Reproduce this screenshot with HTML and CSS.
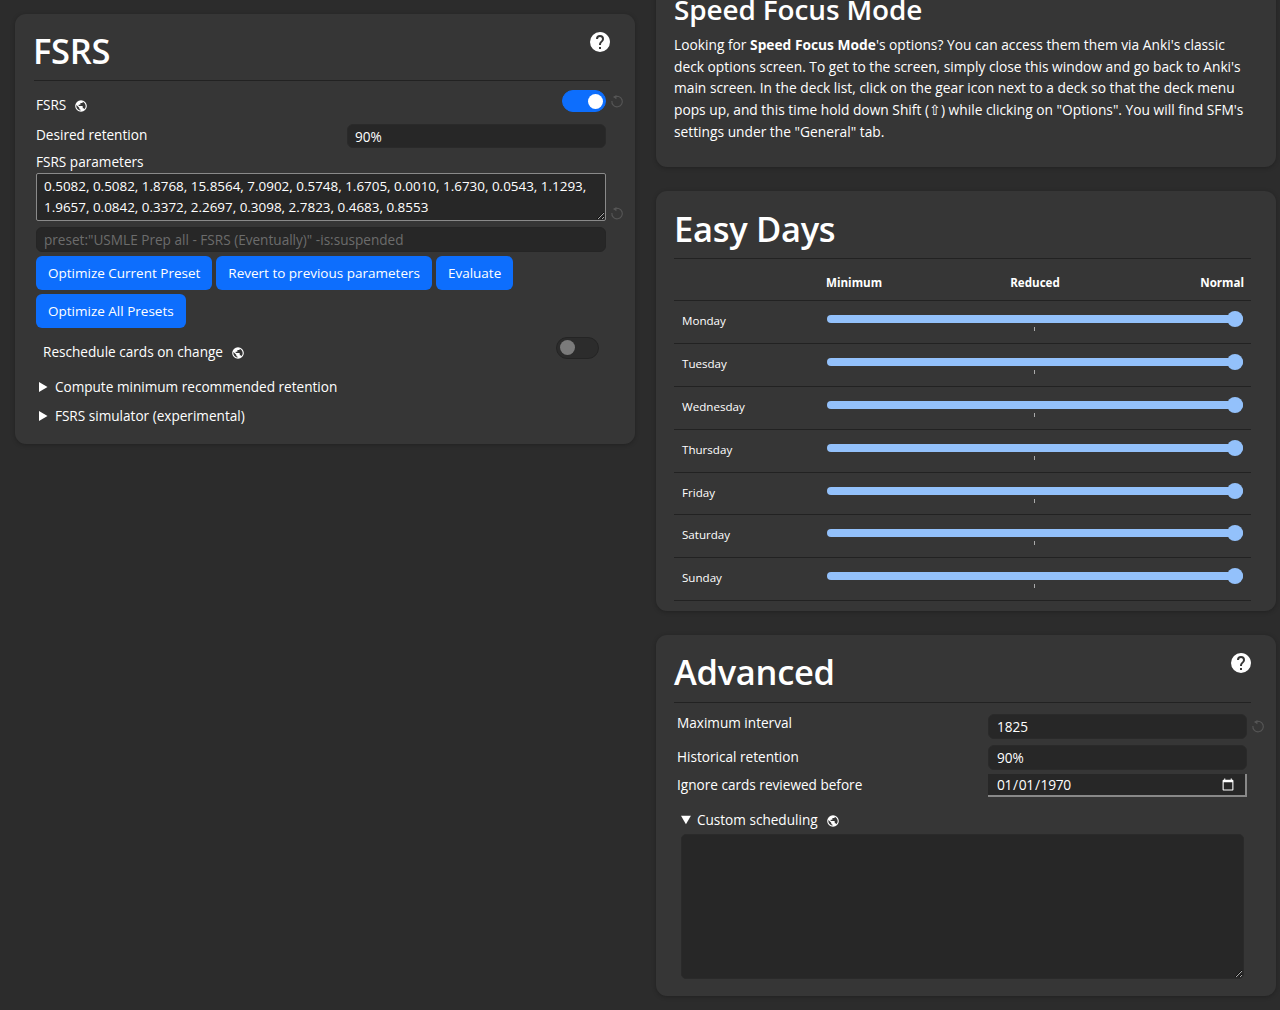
FILE: index.html
```html
<!DOCTYPE html>
<html lang="en">
<head>
<meta charset="utf-8">
<title>Deck options</title>
<link rel="stylesheet" href="styles.css">
</head>
<body>
<svg class="defs" width="0" height="0" aria-hidden="true">
  <symbol id="help" viewBox="0 0 24 24"><path fill="currentColor" d="M15.07,11.25L14.17,12.17C13.45,12.89 13,13.5 13,15H11V14.5C11,13.39 11.45,12.39 12.17,11.67L13.41,10.41C13.78,10.05 14,9.55 14,9C14,7.89 13.1,7 12,7A2,2 0 0,0 10,9H8A4,4 0 0,1 12,5A4,4 0 0,1 16,9C16,9.88 15.64,10.67 15.07,11.25M13,19H11V17H13M12,2A10,10 0 0,0 2,12A10,10 0 0,0 12,22A10,10 0 0,0 22,12C22,6.47 17.5,2 12,2Z"/></symbol>
  <symbol id="globe" viewBox="0 0 24 24"><path fill="currentColor" d="M17.9,17.39C17.64,16.59 16.89,16 16,16H15V13A1,1 0 0,0 14,12H8V10H10A1,1 0 0,0 11,9V7H13A2,2 0 0,0 15,5V4.59C17.93,5.77 20,8.64 20,12C20,14.08 19.2,15.97 17.9,17.39M11,19.93C7.05,19.44 4,16.08 4,12C4,11.38 4.08,10.78 4.21,10.21L9,15V16A2,2 0 0,0 11,18M12,2A10,10 0 0,0 2,12A10,10 0 0,0 12,22A10,10 0 0,0 22,12A10,10 0 0,0 12,2Z"/></symbol>
  <symbol id="revert" viewBox="0 0 24 24"><path fill="none" stroke="currentColor" stroke-width="2" d="M7 5.6A9 9 0 1 1 3.2 12"/><path fill="currentColor" d="M11 1.5V9L5 5.3Z"/></symbol>
</svg>
<main class="page">
  <div class="column">
    <section class="card card-fsrs">
      <header class="card-head">
        <h1>FSRS</h1>
        <svg class="help"><use href="#help"/></svg>
      </header>
      <div class="rows">
        <div class="row row-fsrs">
          <span class="label">FSRS <svg class="globe"><use href="#globe"/></svg></span>
          <span class="toggle on"><span class="knob"></span></span>
          <svg class="revert"><use href="#revert"/></svg>
        </div>
        <div class="row row-retention">
          <span class="label">Desired retention</span>
          <input class="field field-half" type="text" value="90%">
        </div>
        <div class="label label-params">FSRS parameters</div>
        <div class="row row-params">
          <textarea class="params" spellcheck="false">0.5082, 0.5082, 1.8768, 15.8564, 7.0902, 0.5748, 1.6705, 0.0010, 1.6730, 0.0543, 1.1293, 1.9657, 0.0842, 0.3372, 2.2697, 0.3098, 2.7823, 0.4683, 0.8553</textarea>
          <svg class="revert revert-low"><use href="#revert"/></svg>
        </div>
        <input class="field field-search" type="text" placeholder="preset:&quot;USMLE Prep all - FSRS (Eventually)&quot; -is:suspended">
        <div class="buttons">
          <button class="btn">Optimize Current Preset</button>
          <button class="btn">Revert to previous parameters</button>
          <button class="btn">Evaluate</button>
          <button class="btn">Optimize All Presets</button>
        </div>
        <div class="row row-resched">
          <span class="label">Reschedule cards on change <svg class="globe"><use href="#globe"/></svg></span>
          <span class="toggle"><span class="knob"></span></span>
        </div>
        <details class="fold"><summary>Compute minimum recommended retention</summary></details>
        <details class="fold"><summary>FSRS simulator (experimental)</summary></details>
      </div>
    </section>
  </div>

  <div class="column column-right">
    <section class="card card-sfm">
      <h2>Speed Focus Mode</h2>
      <p>Looking for <b>Speed Focus Mode</b>'s options? You can access them them via Anki's classic<br>deck options screen. To get to the screen, simply close this window and go back to Anki's<br>main screen. In the deck list, click on the gear icon next to a deck so that the deck menu<br>pops up, and this time hold down Shift (⇧) while clicking on "Options". You will find SFM's<br>settings under the "General" tab.</p>
    </section>

    <section class="card card-easy">
      <header class="card-head card-head-right">
        <h1>Easy Days</h1>
      </header>
      <div class="easy-head">
        <span>Minimum</span><span>Reduced</span><span>Normal</span>
      </div>
      <div class="day"><span class="day-name">Monday</span><span class="slider"><input type="range" min="0" max="1" step="0.5" value="1"><i class="tick"></i></span></div>
      <div class="day"><span class="day-name">Tuesday</span><span class="slider"><input type="range" min="0" max="1" step="0.5" value="1"><i class="tick"></i></span></div>
      <div class="day"><span class="day-name">Wednesday</span><span class="slider"><input type="range" min="0" max="1" step="0.5" value="1"><i class="tick"></i></span></div>
      <div class="day"><span class="day-name">Thursday</span><span class="slider"><input type="range" min="0" max="1" step="0.5" value="1"><i class="tick"></i></span></div>
      <div class="day"><span class="day-name">Friday</span><span class="slider"><input type="range" min="0" max="1" step="0.5" value="1"><i class="tick"></i></span></div>
      <div class="day"><span class="day-name">Saturday</span><span class="slider"><input type="range" min="0" max="1" step="0.5" value="1"><i class="tick"></i></span></div>
      <div class="day"><span class="day-name">Sunday</span><span class="slider"><input type="range" min="0" max="1" step="0.5" value="1"><i class="tick"></i></span></div>
    </section>

    <section class="card card-adv">
      <header class="card-head card-head-right">
        <h1>Advanced</h1>
        <svg class="help"><use href="#help"/></svg>
      </header>
      <div class="adv-rows">
        <div class="row adv-row-max">
          <span class="label">Maximum interval</span>
          <input class="field field-adv" type="text" value="1825">
          <svg class="revert"><use href="#revert"/></svg>
        </div>
        <div class="row adv-row-hist">
          <span class="label">Historical retention</span>
          <input class="field field-adv" type="text" value="90%">
        </div>
        <div class="row adv-row-date">
          <span class="label">Ignore cards reviewed before</span>
          <input class="date" type="date" value="1970-01-01">
        </div>
        <details class="custom" open>
          <summary>Custom scheduling <svg class="globe"><use href="#globe"/></svg></summary>
          <textarea class="custom-area"></textarea>
        </details>
      </div>
    </section>
  </div>
</main>
</body>
</html>
```
FILE: styles.css
```css
* { box-sizing: border-box; }
html, body { margin: 0; height: 1010px; overflow: hidden; background: #2c2c2c; }
body { font-family: "Open Sans", "Noto Sans", sans-serif; font-size: 13.6px; color: #fff; color-scheme: dark; }
.defs { display: block; height: 0; }
.page { display: grid; grid-template-columns: 620px 620px; column-gap: 21px; padding: 14px 0 0 15px; }
.column { display: flex; flex-direction: column; gap: 24px; }
.column-right { margin-top: -44px; }
.card { background: #363636; border-radius: 11px; box-shadow: 0 1px 4px rgba(0,0,0,.25); }
.card-fsrs { height: 430px; padding: 0 25px 0 19px; }
.card-sfm { height: 197px; padding: 21px 18px 0 18px; }
.card-easy { height: 420px; padding: 0 25px 0 18px; }
.card-adv { height: 361px; padding: 0 25px 0 18px; }
.card-head { height: 67px; display: flex; justify-content: space-between; border-bottom: 1px solid #222; }
.card-head-right { height: 68px; }
h1 { margin: 14px 0 0; font-size: 34.5px; line-height: 45px; font-weight: 600; letter-spacing: -.3px; }
.card-fsrs h1 { margin-left: -1px; }
.card-easy h1 { margin-top: 15px; }
h2 { margin: 0 0 7px; font-size: 27.9px; line-height: 36px; font-weight: 600; letter-spacing: -.1px; }
p { margin: 0; font-size: 13.77px; line-height: 21.7px; white-space: nowrap; }
b { font-weight: 700; }
.help { width: 24px; height: 24px; margin: 16px -2px 0 0; color: #fff; }
.rows { padding: 0 4px 0 2px; }
.row { display: flex; align-items: center; justify-content: space-between; }
.label { display: inline-flex; align-items: center; gap: 8px; font-size: 13.6px; line-height: 20px; }
.globe { width: 14px; height: 14px; margin-top: 2px; color: #fff; }
.revert { width: 14px; height: 14px; margin: 0 -18px 0 4px; color: #555; flex: none; }
.row-fsrs { height: 43px; }
.row-fsrs .label { margin-top: 5px; }
.row-fsrs .revert { margin-top: -3px; }
.row-fsrs .toggle { margin-left: auto; margin-top: -3px; }
.row-retention { height: 24px; }
.row-retention .label { margin-top: -3px; }
.field { height: 25px; border: 1px solid #2a2a2a; border-radius: 6px; background: #272727; color: #fff; font: inherit; font-size: 13.6px; padding: 0 7px; outline: 0; }
.field-half { width: 259px; height: 24px; }
.field-adv { width: 259px; margin-left: auto; padding: 0 8px; }
.field-search { display: block; width: 100%; margin-top: 6px; background: #272727; border-color: #252525; }
.field-search::placeholder { color: #6c6c6c; opacity: 1; }
.label-params { display: block; margin-top: 3px; height: 22px; line-height: 21px; }
.row-params { align-items: flex-end; }
.row-params .revert { margin-bottom: 1px; }
.params { width: 100%; height: 48px; padding: 2px 7px; background: #272727; color: #fff; border: 1px solid #8a8a8a; border-radius: 2px; font: inherit; font-size: 13.45px; line-height: 21px; outline: 0; overflow: hidden; }
.buttons { display: flex; flex-wrap: wrap; gap: 4px; margin-top: 4px; }
.btn { height: 34px; padding: 0 12px; border: 0; border-radius: 6px; background: #0d6efd; color: #fff; font: inherit; font-size: 13.5px; }
.toggle { width: 43px; height: 22px; padding: 2.5px 3px; display: flex; border-radius: 11px; background: #2c2c2c; border: 1px solid #242424; }
.knob { width: 15px; height: 15px; border-radius: 50%; background: #7b7b7b; }
.toggle.on { width: 44px; background: #0d6efd; border-color: #0d6efd; justify-content: flex-end; padding-right: 2px; }
.toggle.on .knob { background: #fff; }
.row-resched { height: 39px; padding: 0 7px; margin-top: 5px; }
.row-resched .label { margin-top: -2px; }
.row-resched .toggle { margin-top: -10px; }
.fold summary { line-height: 20px; height: 29px; padding: 4px 0 0 3px; font-size: 13.6px; }
.fold summary::marker { font-size: 15px; }
.easy-head { display: grid; grid-template-columns: 152px 1fr auto 1fr; height: 42px; align-items: center; border-bottom: 1px solid #222; font-size: 11.6px; font-weight: 700; padding-top: 5px; padding-right: 7px; }
.easy-head span:nth-child(1) { grid-column: 2; text-align: left; }
.easy-head span:nth-child(2) { grid-column: 3; text-align: center; }
.easy-head span:nth-child(3) { grid-column: 4; text-align: right; }
.day { height: 42.9px; display: flex; align-items: flex-start; border-bottom: 1px solid #222; }
.day-name { width: 153px; padding: 11px 0 0 8px; font-size: 11.6px; line-height: 17px; }
.slider { width: 416px; margin-top: 10px; display: flex; flex-direction: column; align-items: center; }
.slider input { width: 100%; height: 16px; margin: 0; -webkit-appearance: none; appearance: none; background: transparent; display: block; }
.slider input::-webkit-slider-runnable-track { height: 8px; background: #93c1fb; border-radius: 4px; }
.slider input::-webkit-slider-thumb { -webkit-appearance: none; width: 16px; height: 16px; margin-top: -4px; border-radius: 50%; background: #93c1fb; }
.tick { display: block; width: 1px; height: 4px; margin: 0 1px 0 0; background: #aaa; }
.adv-rows { padding: 0 4px 0 3px; }
.adv-row-max { height: 26px; margin-top: 10px; }
.adv-row-max .label { margin-top: -6px; }
.adv-row-hist { height: 25px; margin-top: 6px; }
.adv-row-hist .label { margin-top: -2px; }
.adv-row-date { height: 24px; margin-top: 3px; }
.adv-row-date .label { margin-top: -1px; }
.date { width: 259px; height: 23px; margin: 1px 0 0 auto; padding: 0 8px; background: #272727; color: #fff; border: 0; border-right: 2px solid #888; border-bottom: 2px solid #888; font: inherit; font-size: 13.8px; letter-spacing: -.35px; }
.custom { margin: 12px 0 0 4px; }
.custom summary { font-size: 13.6px; line-height: 20px; height: 25px; }
.custom summary .globe { margin: 0 0 -3px 5px; }
.custom summary::marker { font-size: 15px; }
.custom-area { display: block; width: 563px; height: 145px; background: #272727; border: 1px solid #2a2a2a; border-radius: 5px; color: #fff; outline: 0; }
```
